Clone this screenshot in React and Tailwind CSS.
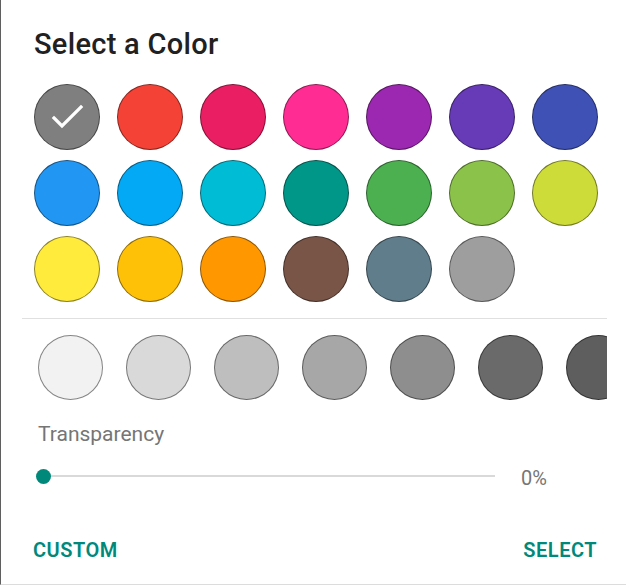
import React from 'react';

const colors = [
  '#7f7f7f', '#f44336', '#e91e63', '#ff2d93', '#9c27b0', '#673ab7', '#3f51b5',
  '#2196f3', '#03a9f4', '#00bcd4', '#009688', '#4caf50', '#8bc34a', '#cddc39',
  '#ffeb3b', '#ffc107', '#ff9800', '#795548', '#607d8b', '#9e9e9e',
];

const grays = ['#f2f2f2', '#d9d9d9', '#bebebe', '#a7a7a7', '#8e8e8e', '#6a6a6a', '#5e5e5e'];

function Check() {
  return (
    <svg width="34" height="34" viewBox="0 0 34 34" fill="none">
      <path d="M4 18 L12 26 L31 7" stroke="white" strokeWidth="3.2" strokeLinecap="square" />
    </svg>
  );
}

export default function App() {
  return (
    <div className="w-[626px] h-[585px] bg-white border-l border-l-[#5f5f5f] border-b border-b-[#dcdcdc] font-['Roboto',sans-serif] overflow-hidden">
      <h2 className="pt-[27px] pl-[33px] text-[29px] leading-[34px] font-medium tracking-[0.3px] text-[#212121]">
        Select a Color
      </h2>

      <div className="mt-[23px] ml-[33px] grid grid-cols-[repeat(7,66px)] gap-x-[17px] gap-y-[10px]">
        {colors.map((c, i) => (
          <div
            key={c}
            className="w-[66px] h-[66px] rounded-full border border-[rgba(0,0,0,0.45)] flex items-center justify-center"
            style={{ backgroundColor: c }}
          >
            {i === 0 && <Check />}
          </div>
        ))}
      </div>

      <div className="mt-[16px] ml-[21px] w-[585px] h-px bg-[#e0e0e0]" />

      <div className="mt-[16px] ml-[21px] w-[585px] overflow-hidden">
        <div className="flex gap-[23px] pl-[16px]">
          {grays.map((g) => (
            <div
              key={g}
              className="w-[65px] h-[65px] shrink-0 rounded-full border border-[rgba(0,0,0,0.45)]"
              style={{ backgroundColor: g }}
            />
          ))}
        </div>
      </div>

      <div className="mt-[22px] pl-[37px] text-[21px] leading-[24px] text-[#757575]">Transparency</div>

      <div className="mt-[15px] h-[30px] flex items-center">
        <div className="ml-[42px] relative w-[452px] h-[2px] bg-[#d9d9d9]">
          <div className="absolute -left-[7.5px] -top-[6.5px] w-[15px] h-[15px] rounded-full bg-[#00897b]" />
        </div>
        <span className="ml-[26px] mt-[3px] text-[20px] text-[#757575]">0%</span>
      </div>

      <div className="mt-[47px] flex justify-between pl-[32px] pr-[29px] text-[20px] leading-[24px] font-semibold tracking-[0.5px] text-[#00897b]">
        <span>CUSTOM</span>
        <span>SELECT</span>
      </div>
    </div>
  );
}
